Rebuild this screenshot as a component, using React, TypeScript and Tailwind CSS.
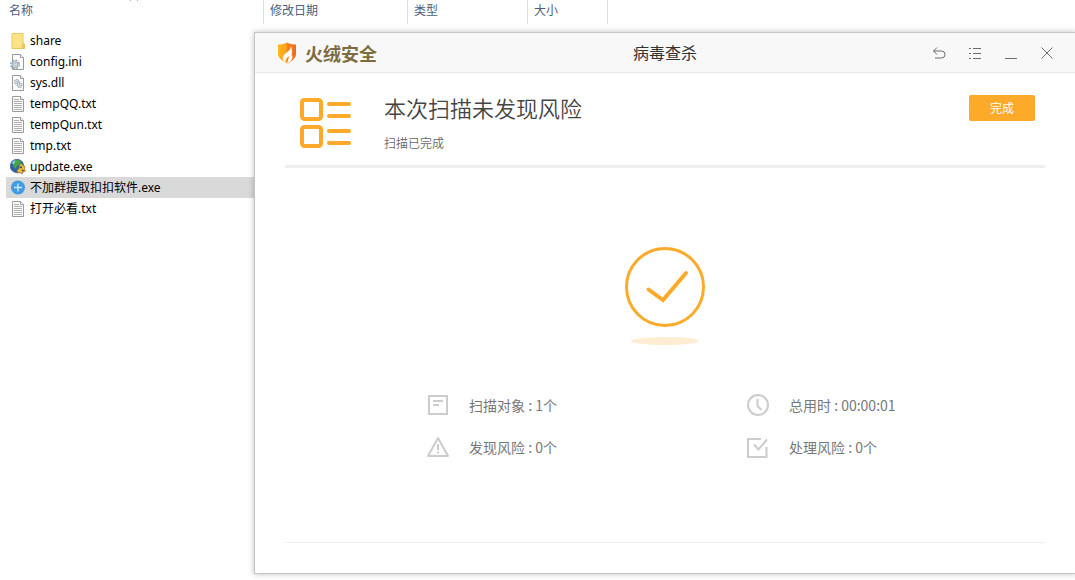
import React from 'react';

type FileKind = 'folder' | 'config' | 'library' | 'text' | 'globe' | 'plus';

interface FileItem {
  name: string;
  kind: FileKind;
  selected?: boolean;
}

const files: FileItem[] = [
  { name: 'share', kind: 'folder' },
  { name: 'config.ini', kind: 'config' },
  { name: 'sys.dll', kind: 'library' },
  { name: 'tempQQ.txt', kind: 'text' },
  { name: 'tempQun.txt', kind: 'text' },
  { name: 'tmp.txt', kind: 'text' },
  { name: 'update.exe', kind: 'globe' },
  { name: '不加群提取扣扣软件.exe', kind: 'plus', selected: true },
  { name: '打开必看.txt', kind: 'text' },
];

const Sheet: React.FC = () => (
  <>
    <path d="M2.5 .5h8l3 3v12h-11z" fill="#fbfbfb" stroke="#9a9a9a" />
    <path d="M10.5 .5v3h3" fill="#fff" stroke="#9a9a9a" />
  </>
);

const FileIcon: React.FC<{ kind: FileKind }> = ({ kind }) => (
  <svg className="h-4 w-4 shrink-0" viewBox="0 0 16 16" fill="none" aria-hidden="true">
    {kind === 'folder' && (
      <>
        <path d="M2 .5h11v10l1.5 1v4H2z" fill="#fde388" stroke="#e9c860" />
        <path d="M12.5 15.5v-4l1.5-1v5z" fill="#f5cf5c" stroke="#dfb84a" strokeWidth=".6" />
      </>
    )}
    {kind === 'config' && (
      <>
        <Sheet />
        <circle cx="5" cy="10.500" r="4.2" stroke="#98a4ae" strokeWidth="1.500" strokeDasharray="1.900 1.400" />
        <circle cx="5" cy="10.500" r="3" fill="#dfe5e9" stroke="#98a4ae" />
        <circle cx="5" cy="10.500" r="1.100" fill="#fff" stroke="#98a4ae" strokeWidth=".8" />
      </>
    )}
    {kind === 'library' && (
      <>
        <Sheet />
        <circle cx="6.8" cy="6.8" r="2.3" fill="#e3e9ed" stroke="#98a4ae" strokeWidth="1.2" strokeDasharray="1.2 .6" />
        <circle cx="9.6" cy="10" r="2.3" fill="#e3e9ed" stroke="#98a4ae" strokeWidth="1.2" strokeDasharray="1.2 .6" />
        <circle cx="6.8" cy="6.8" r=".8" fill="#98a4ae" />
        <circle cx="9.6" cy="10" r=".8" fill="#98a4ae" />
      </>
    )}
    {kind === 'text' && (
      <>
        <Sheet />
        <path d="M4 3.5h5M4 5.5h8M4 7.5h8M4 9.5h8M4 11.5h8M4 13.5h8" stroke="#b0b0b0" />
      </>
    )}
    {kind === 'globe' && (
      <>
        <circle cx="7" cy="7" r="6.8" fill="#2b62a8" stroke="#27486f" strokeWidth=".5" />
        <path d="M3 3c2-2.500 6-2.500 8-.5l-1 3-3 1.500-1 3-3-2.500z" fill="#46a546" />
        <path d="M1.500 4.500C2.500 2.500 4 1.500 5.500 1.200L4 5z" fill="#9bd0ee" />
        <path d="M9.500 5.500l2-1 1.500 2 2 1-.5 2.500 1 2-2.500 1-1 2-2-1.500-2.500.5-.5-2.500 2-2z" fill="#f1bf3c" stroke="#8a6419" strokeWidth=".7" />
        <circle cx="11" cy="8.300" r="1.100" fill="#3b4a55" />
        <circle cx="12.700" cy="11.500" r="1" fill="#3b4a55" />
      </>
    )}
    {kind === 'plus' && (
      <>
        <circle cx="8" cy="7.500" r="7" fill="#3f9de4" />
        <path d="M8 3.500v8M4 7.500h8" stroke="#d4ebfb" strokeWidth="1.300" />
      </>
    )}
  </svg>
);

const FileExplorer: React.FC = () => (
  <main className="pl-1.5 font-['Noto_Sans','Noto_Sans_CJK_SC',sans-serif] text-xs text-black">
    <table className="w-[602px] table-fixed border-separate border-spacing-0">
      <thead>
        <tr className="h-6 text-left text-[#4c607a]">
          <th className="relative w-[258px] border-r border-[#dedede] p-0 pb-0.5 pl-[3px] font-normal leading-5">
            名称
            <svg className="absolute left-[123px] top-0 h-1 w-3" viewBox="0 0 12 4" fill="none" aria-hidden="true">
              <path d="M3 -1.500l-1.500 2M7 -1.500l1.500 2" stroke="#555" />
            </svg>
          </th>
          <th className="w-36 border-r border-[#dedede] p-0 pb-0.5 pl-1.5 font-normal leading-5">修改日期</th>
          <th className="w-[120px] border-r border-[#dedede] p-0 pb-0.5 pl-1.5 font-normal leading-5">类型</th>
          <th className="w-20 border-r border-[#dedede] p-0 pb-0.5 pl-1.5 font-normal leading-5">大小</th>
        </tr>
        <tr className="h-1.5" />
      </thead>
      <tbody>
        {files.map((file) => (
          <tr key={file.name} className={file.selected ? 'bg-[#d9d9d9]' : ''}>
            <td colSpan={4} className="p-0 pl-1">
              <div className="flex h-[21px] items-center gap-1">
                <FileIcon kind={file.kind} />
                <span className="whitespace-nowrap leading-5">{file.name}</span>
              </div>
            </td>
          </tr>
        ))}
      </tbody>
    </table>
  </main>
);

const ShieldLogo: React.FC = () => (
  <svg className="h-[22px] w-5" viewBox="0 0 20 22" aria-hidden="true">
    <defs>
      <linearGradient id="shield" x1="0" y1="0" x2="1" y2="0">
        <stop offset="0" stopColor="#ffb81c" />
        <stop offset=".5" stopColor="#fd9d1c" />
        <stop offset=".52" stopColor="#f9801b" />
        <stop offset="1" stopColor="#f4681c" />
      </linearGradient>
    </defs>
    <path d="M10 .5c2.500 1.500 5.500 2 9 2V12c0 4-4 7-8 9.500C5 19 1 16 1 12V2.500c3.500 0 6.500-.5 9-2z" fill="url(#shield)" />
    <path d="M13.800 4c.3 2.500-1 4-3.800 6.200-3.500 2.800-5.500 5-3.200 8.800l1.700 1.500c-.8-2.800 1.500-4.500 3.500-6.500-.3 2.500-1 4.500-2 7.500 4-1.500 6-4.500 5.300-8.500l-1 1.200c1-3.700 1.200-7.200-.5-10.200z" fill="#fff" />
  </svg>
);

const windowActions = [
  { label: '返回', path: 'M6 2.500L2.500 6L6 9.500M2.500 6H10.500a3.500 3.500 0 0 1 0 7H4' },
  { label: '菜单', path: 'M2 3.500h2M6 3.500h8M2 8.500h2M6 8.500h8M2 13.500h2M6 13.500h8' },
  { label: '最小化', path: 'M2 13.500h12' },
  { label: '关闭', path: 'M2.500 2.500l11 11M13.500 2.500l-11 11' },
];

const TitleBar: React.FC = () => (
  <header className="grid h-10 grid-cols-3 items-center border-b border-[#e8e8e8] bg-[#f8f8f8]">
    <div className="flex items-center gap-2 pl-[22px]">
      <ShieldLogo />
      <span className="text-lg font-bold leading-6 text-[#7d6c42]">火绒安全</span>
    </div>
    <h1 className="pb-0.5 text-center text-base leading-6 text-[#333]">病毒查杀</h1>
    <div className="flex justify-end pr-2.5">
      {windowActions.map((action) => (
        <button key={action.label} type="button" aria-label={action.label} className="flex h-9 w-9 items-center justify-center">
          <svg className="h-4 w-4" viewBox="0 0 16 16" fill="none" stroke="#6b6b6b" aria-hidden="true">
            <path d={action.path} />
          </svg>
        </button>
      ))}
    </div>
  </header>
);

const ScanSummary: React.FC = () => (
  <section className="flex h-[95px] items-start border-b-[3px] border-[#eee] pl-[15px] pr-2.5">
    <svg className="mt-[25px] h-[50px] w-[52px]" viewBox="0 0 52 50" fill="none" stroke="#fda929" strokeWidth="4" aria-hidden="true">
      <rect x="2" y="2" width="19" height="19" rx="2.500" />
      <rect x="2" y="29" width="19" height="19" rx="2.500" />
      <path d="M29 6h20M29 18h20M29 33h20M29 45h20" strokeLinecap="round" />
    </svg>
    <div className="ml-8 mt-[18px] flex-1">
      <h2 className="text-[22px] font-[350] leading-8 text-[#444]">本次扫描未发现风险</h2>
      <p className="mt-2.5 text-xs font-[350] leading-5 text-[#666]">扫描已完成</p>
    </div>
    <button type="button" className="mt-[22px] h-[26px] w-[66px] rounded-xs bg-[#fda929] text-xs text-white">
      完成
    </button>
  </section>
);

const stats = [
  {
    label: '扫描对象',
    value: '1个',
    icon: <path d="M4 4h18v18H4zM8 9h10M8 13h6" />,
  },
  {
    label: '总用时',
    value: '00:00:01',
    icon: (
      <>
        <circle cx="13" cy="13" r="10" />
        <path d="M12.500 7v7l4 4" />
      </>
    ),
  },
  {
    label: '发现风险',
    value: '0个',
    icon: <path d="M13 4L23 22H3zM13 10v6M13 17.500v2" strokeLinejoin="round" />,
  },
  {
    label: '处理风险',
    value: '0个',
    icon: <path d="M16 5H3v18h18.500V13M9 10.500l4.500 5L22 5.500" />,
  },
];

const ScanResult: React.FC = () => (
  <section>
    <svg className="mx-auto mt-[78px] h-[100px] w-[82px]" viewBox="0 0 82 100" fill="none" aria-hidden="true">
      <circle cx="41" cy="41" r="38.500" stroke="#fda929" strokeWidth="3" />
      <path d="M24.500 43.500L39 54l23-27" stroke="#fda929" strokeWidth="4" strokeLinecap="round" />
      <ellipse cx="41" cy="95" rx="34" ry="4" fill="#ffecd2" />
    </svg>
    <ul className="mx-auto mt-[38px] grid w-[480px] grid-cols-[320px_160px]">
      {stats.map((stat) => (
        <li key={stat.label} className="flex h-[42px] items-center gap-[18px]">
          <svg className="h-[26px] w-[26px]" viewBox="0 0 26 26" fill="none" stroke="#ccc" strokeWidth="2" aria-hidden="true">
            {stat.icon}
          </svg>
          <span className="whitespace-nowrap text-sm leading-5 text-[#777]">
            {stat.label} : {stat.value}
          </span>
        </li>
      ))}
    </ul>
  </section>
);

const App: React.FC = () => {
  return (
    <div className="relative min-h-screen overflow-hidden bg-white">
      <FileExplorer />
      {/* Scanner window floating over the file list */}
      <div className="absolute left-[255px] right-0 top-[33px] bg-white font-['Noto_Sans_CJK_SC',sans-serif] shadow-[0_0_0_1px_#c4c4c4,0_0_6px_1px_rgba(0,0,0,0.25)]">
        <TitleBar />
        <div className="px-[30px] pb-[30px]">
          <ScanSummary />
          <ScanResult />
          <hr className="mt-[74px] border-[#eee]" />
        </div>
      </div>
    </div>
  );
};

export default App;
